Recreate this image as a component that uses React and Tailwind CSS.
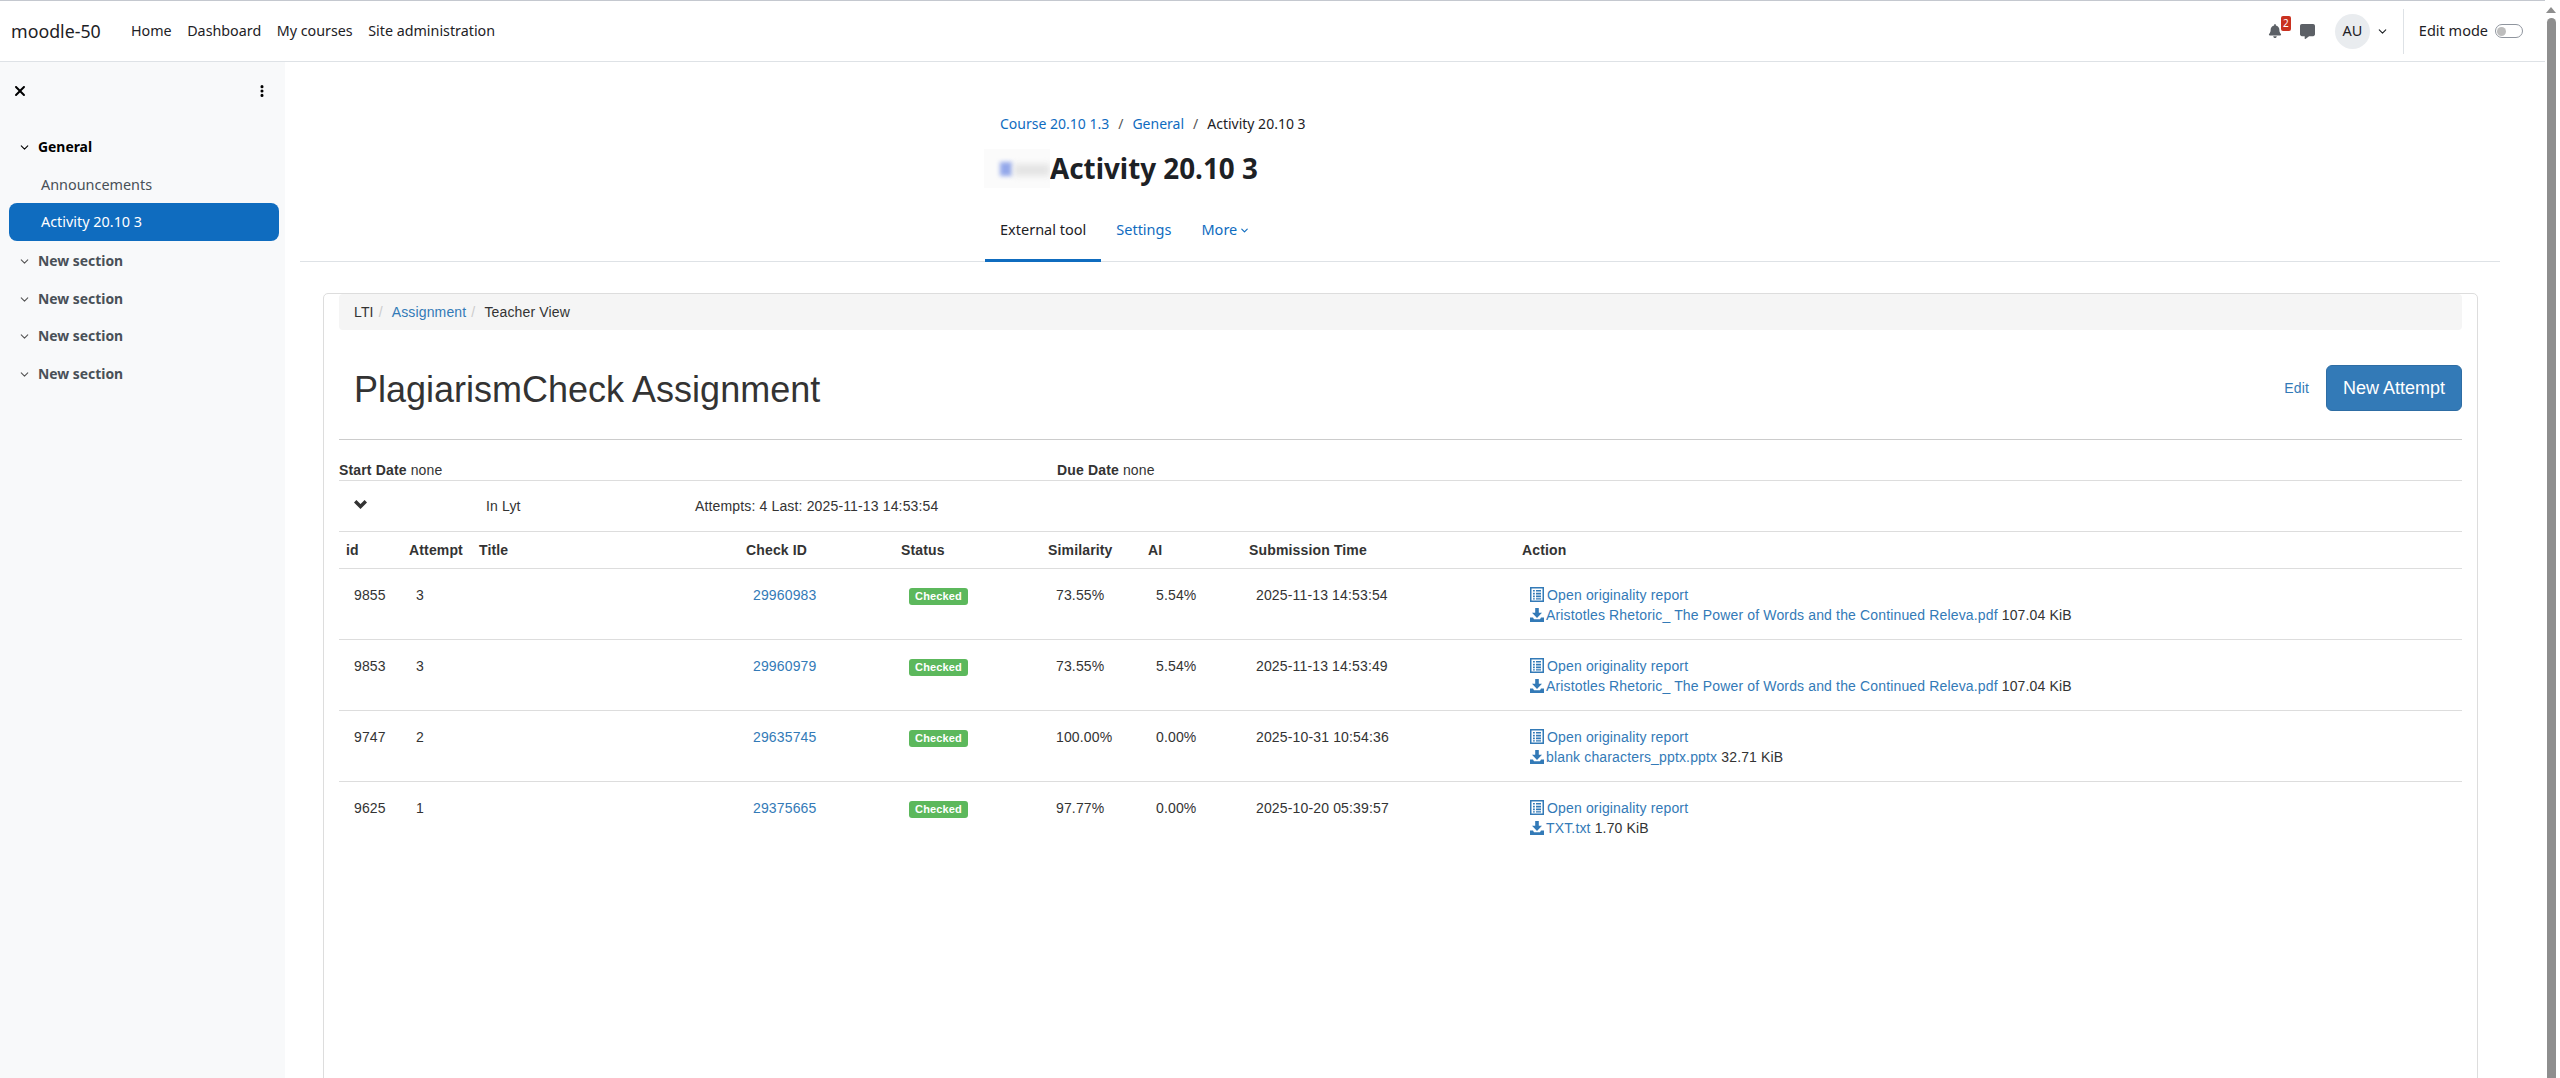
import { ChevronDown } from "lucide-react";
import { FaBell, FaMessage, FaXmark, FaEllipsisVertical } from "react-icons/fa6";

const navLinks = ["Home", "Dashboard", "My courses", "Site administration"];

const attempts = [
  { id: "9855", attempt: "3", check: "29960983", sim: "73.55%", ai: "5.54%", time: "2025-11-13 14:53:54", file: "Aristotles Rhetoric_ The Power of Words and the Continued Releva.pdf", size: "107.04 KiB" },
  { id: "9853", attempt: "3", check: "29960979", sim: "73.55%", ai: "5.54%", time: "2025-11-13 14:53:49", file: "Aristotles Rhetoric_ The Power of Words and the Continued Releva.pdf", size: "107.04 KiB" },
  { id: "9747", attempt: "2", check: "29635745", sim: "100.00%", ai: "0.00%", time: "2025-10-31 10:54:36", file: "blank characters_pptx.pptx", size: "32.71 KiB" },
  { id: "9625", attempt: "1", check: "29375665", sim: "97.77%", ai: "0.00%", time: "2025-10-20 05:39:57", file: "TXT.txt", size: "1.70 KiB" },
];

function ListIcon() {
  return (
    <svg width="14" height="15" viewBox="0 0 14 15" className="shrink-0" fill="#337ab7">
      <path fillRule="evenodd" d="M0 0h14v15H0zM1.5 1.5v12h11v-12z" />
      <path d="M3 3h1.8v1.6H3zM6 3h5v1.6H6zM3 5.8h1.8v1.6H3zM6 5.8h5v1.6H6zM3 8.6h1.8v1.6H3zM6 8.6h5v1.6H6zM3 11.2h1.8v1.4H3zM6 11.2h5v1.4H6z" />
    </svg>
  );
}

function DownloadIcon() {
  return (
    <svg width="14" height="14" viewBox="0 0 14 14" className="shrink-0" fill="#337ab7">
      <path d="M5.2 0h3.6v4.8H12L7 10 2 4.8h3.2z" />
      <path d="M0 9.6h3l1 1.6h6l1-1.6h3V14H0z" />
    </svg>
  );
}

function SectionRow({ label, active }) {
  return (
    <div className="flex items-center h-[37.7px] pl-[18px]">
      <ChevronDown size={13} strokeWidth={2} className={active ? "text-black" : "text-[#555]"} />
      <span className={`ml-[7px] text-[13.9px] font-bold ${active ? "text-black" : "text-[#495057]"}`}>{label}</span>
    </div>
  );
}

export default function App() {
  return (
    <div className="flex h-[1078px] overflow-hidden bg-white font-['Noto_Sans',sans-serif] text-[#1d2125]">
      <div className="flex-1 min-w-0">
        {/* Top nav */}
        <header className="h-[62px] border-t border-t-[#c4c8cf] border-b border-b-[#dee2e6] flex items-center">
          <span className="ml-[11px] text-[17.8px] text-[#1d2125] w-[120px]">moodle-50</span>
          <nav className="flex gap-[15.5px] text-[14.3px] text-[#1d2125]">
            {navLinks.map((l) => (
              <span key={l}>{l}</span>
            ))}
          </nav>
          <div className="ml-auto flex items-center h-full">
            <div className="relative w-[14px] text-[#5c6066]">
              <FaBell size={14} />
              <span className="absolute left-[13px] -top-[8px] w-[10px] h-[15px] bg-[#ca3120] text-white text-[10px] leading-[15px] text-center rounded-[2px]">2</span>
            </div>
            <FaMessage size={15} className="ml-[18px] text-[#5c6066]" />
            <div className="ml-[20px] w-[35px] h-[35px] rounded-full bg-[#e9ecef] flex items-center justify-center text-[14.5px]">AU</div>
            <ChevronDown size={13} strokeWidth={2} className="ml-[6px]" />
            <div className="ml-[14px] w-px h-[45px] bg-[#dee2e6]" />
            <span className="ml-[15px] text-[14.5px]">Edit mode</span>
            <div className="ml-[7px] mr-[22px] w-[28px] h-[14px] rounded-full border border-[#8f959e] flex items-center pl-[1px]">
              <div className="w-[9px] h-[9px] rounded-full bg-[#bdbdbd]" />
            </div>
          </div>
        </header>

        <div className="flex h-[1016px]">
          {/* Course index */}
          <aside className="w-[285px] shrink-0 bg-[#f8f9fa]">
            <div className="flex items-center justify-between h-[56px] mt-[1px] pl-[12px] pr-[16px]">
              <FaXmark size={16} className="text-black" />
              <FaEllipsisVertical size={14} className="text-black" />
            </div>
            <div className="mt-[10px]">
              <SectionRow label="General" active />
              <div className="h-[36px] flex items-center pl-[41px] text-[14.4px] text-[#495057]">Announcements</div>
              <div className="h-[38px] flex items-center ml-[9px] mb-[2px] w-[270px] pl-[32px] rounded-[8px] bg-[#0f6cbf] text-[14.4px] text-white">Activity 20.10 3</div>
              <SectionRow label="New section" />
              <SectionRow label="New section" />
              <SectionRow label="New section" />
              <SectionRow label="New section" />
            </div>
          </aside>

          {/* Main */}
          <main className="flex-1 min-w-0 pl-[15px] pr-[45px]">
            <div className="border-b border-[#dee2e6] h-[200px] pl-[700px]">
              <div className="pt-[51px] text-[14px] flex gap-[9px] h-[83.5px]">
                <span className="text-[#0f6cbf]">Course 20.10 1.3</span>
                <span className="text-[#555]">/</span>
                <span className="text-[#0f6cbf]">General</span>
                <span className="text-[#555]">/</span>
                <span>Activity 20.10 3</span>
              </div>
              <div className="flex items-center h-[46px] -ml-[16px]">
                <div className="relative w-[66px] h-[39px] shrink-0 overflow-hidden bg-[#fbfbfb]">
                  <div className="absolute left-[16px] top-[13px] w-[12px] h-[14px] bg-[#94a8ea] blur-[2px]" />
                  <div className="absolute left-[30px] top-[15px] w-[36px] h-[12px] bg-[#e4e4e4] blur-[3px]" />
                </div>
                <h1 className="text-[27.8px] font-bold text-[#1d2125]">Activity 20.10 3</h1>
              </div>
              <div className="flex mt-[10.5px] -ml-[15px] text-[14.5px] h-[60px]">
                <div className="px-[15px] h-[60px] pt-[17px] border-b-[3px] border-[#0f6cbf]">External tool</div>
                <div className="px-[15px] pt-[17px] text-[#0f6cbf]">Settings</div>
                <div className="px-[15px] pt-[17px] text-[#0f6cbf] flex gap-[2px] items-start">
                  More
                  <ChevronDown size={11} strokeWidth={2.5} className="mt-[6px]" />
                </div>
              </div>
            </div>

            {/* LTI frame */}
            <div className="mt-[31px] ml-[23px] w-[2155px] h-[800px] border border-[#ddd] rounded-[5px] pl-[15px] pr-[15px] font-['Liberation_Sans',sans-serif] text-[14px] leading-[20px] text-[#333] tracking-[0.15px]">
              <div className="h-[36px] bg-[#f5f5f5] rounded-[4px] px-[15px] flex items-center">
                <span>LTI</span>
                <span className="px-[5px] text-[#ccc]">/</span>
                <span className="ml-[4px] text-[#337ab7]">Assignment</span>
                <span className="px-[5px] text-[#ccc]">/</span>
                <span className="ml-[4px]">Teacher View</span>
              </div>
              <div className="h-[110px] border-b border-[#ccc] flex items-center pl-[15px] pt-[6px]">
                <h2 className="mt-[4px] text-[36px] leading-[40px] tracking-normal">PlagiarismCheck Assignment</h2>
                <span className="ml-auto text-[#337ab7]">Edit</span>
                <button className="ml-[17px] w-[136px] h-[46px] rounded-[6px] bg-[#337ab7] border border-[#2e6da4] text-white text-[18px] tracking-normal">New Attempt</button>
              </div>
              <div className="h-[41px] border-b border-[#ddd] flex items-end">
                <span className="w-[718px]"><b>Start Date</b> none</span>
                <span><b>Due Date</b> none</span>
              </div>
              <div className="h-[51px] border-b border-[#ddd] flex items-center">
                <svg width="13" height="9" viewBox="0 0 13 9" className="ml-[15px] -mt-[4px] shrink-0" fill="none" stroke="#333" strokeWidth="3.4">
                  <path d="M1.2 1.2 6.5 6.5l5.3-5.3" />
                </svg>
                <span className="ml-[119px] w-[209px]">In Lyt</span>
                <span>Attempts: 4 Last: 2025-11-13 14:53:54</span>
              </div>
              <table className="w-full table-fixed border-collapse">
                <colgroup>
                  <col className="w-[63px]" />
                  <col className="w-[70px]" />
                  <col className="w-[267px]" />
                  <col className="w-[155px]" />
                  <col className="w-[147px]" />
                  <col className="w-[100px]" />
                  <col className="w-[101px]" />
                  <col className="w-[273px]" />
                  <col />
                </colgroup>
                <thead>
                  <tr className="h-[36px] border-b border-[#ddd] text-left">
                    {["id", "Attempt", "Title", "Check ID", "Status", "Similarity", "AI", "Submission Time", "Action"].map((h) => (
                      <th key={h} className="pl-[7px] font-bold">{h}</th>
                    ))}
                  </tr>
                </thead>
                <tbody>
                  {attempts.map((a) => (
                    <tr key={a.id} className="h-[71px] border-b border-[#ddd] last:border-b-0 align-top">
                      <td className="pl-[15px] pt-[16px]">{a.id}</td>
                      <td className="pl-[14px] pt-[16px]">{a.attempt}</td>
                      <td />
                      <td className="pl-[14px] pt-[16px] text-[#337ab7]">{a.check}</td>
                      <td className="pl-[15px] pt-[16px]">
                        <span className="inline-block w-[59px] h-[17px] bg-[#5cb85c] rounded-[3px] text-white text-[11px] font-bold leading-[17px] text-center align-top mt-[3px]">Checked</span>
                      </td>
                      <td className="pl-[15px] pt-[16px]">{a.sim}</td>
                      <td className="pl-[15px] pt-[16px]">{a.ai}</td>
                      <td className="pl-[14px] pt-[16px]">{a.time}</td>
                      <td className="pl-[15px] pt-[16px]">
                        <div className="flex items-center gap-[3px] text-[#337ab7]">
                          <ListIcon />
                          <span>Open originality report</span>
                        </div>
                        <div className="flex items-center gap-[2px]">
                          <DownloadIcon />
                          <span><span className="text-[#337ab7]">{a.file}</span> {a.size}</span>
                        </div>
                      </td>
                    </tr>
                  ))}
                </tbody>
              </table>
            </div>
          </main>
        </div>
      </div>

      {/* Page scrollbar */}
      <div className="w-[15px] shrink-0 flex flex-col items-center pt-[7px] pr-[3px]">
        <div className="w-0 h-0 border-l-[5px] border-r-[5px] border-b-[6px] border-l-transparent border-r-transparent border-b-[#8e8e8e]" />
        <div className="mt-[5px] w-[9px] flex-1 rounded-t-[5px] bg-[#8e8e8e]" />
      </div>
    </div>
  );
}
